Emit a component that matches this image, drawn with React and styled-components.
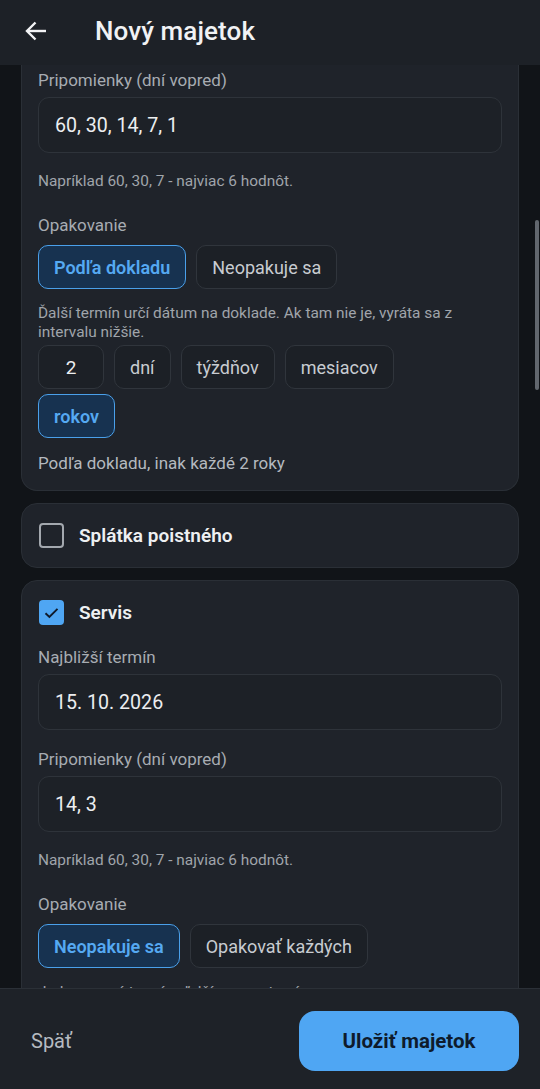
import React from "react";
import styled, { createGlobalStyle, css } from "styled-components";

const Global = createGlobalStyle`
  html, body { margin: 0; padding: 0; background: #111418; }
  body { font-family: Roboto, "Noto Sans", "Liberation Sans", sans-serif; -webkit-font-smoothing: antialiased; }
  * { box-sizing: border-box; }
`;

const Screen = styled.div`
  width: 540px;
  height: 1089px;
  display: flex;
  flex-direction: column;
  background: #111418;
  overflow: hidden;
`;

const Header = styled.header`
  height: 65px;
  flex: none;
  display: flex;
  align-items: center;
  gap: 48px;
  padding: 0 0 4px 25px;
  background: #1d2127;
`;

const BackButton = styled.button`
  width: 22px;
  height: 22px;
  padding: 0;
  border: 0;
  background: none;
  display: flex;
  color: #f2f3f5;
`;

const Title = styled.h1`
  margin: 0;
  font-size: 26px;
  font-weight: 500;
  color: #f1f2f4;
  letter-spacing: 0.1px;
`;

const ScrollArea = styled.main`
  position: relative;
  flex: 1;
  overflow: hidden;
`;

const Content = styled.div`
  display: flex;
  flex-direction: column;
  gap: 12px;
  padding: 0 21px;
`;

const Card = styled.section`
  display: flex;
  flex-direction: column;
  background: #1f232a;
  border: 1px solid #2a2f36;
  border-radius: 16px;
  padding: 19px 16px 16px;
  ${(p) =>
    p.$cut &&
    css`
      border-top: none;
      border-radius: 0 0 16px 16px;
      padding-top: 4px;
    `}
  ${(p) =>
    p.$compact &&
    css`
      padding-bottom: 19px;
    `}
`;

const CheckRow = styled.label`
  display: flex;
  align-items: center;
  gap: 15px;
  height: 25px;
  padding-left: 1px;
`;

const Box = styled.span`
  width: 25px;
  height: 25px;
  border-radius: 4px;
  display: flex;
  align-items: center;
  justify-content: center;
  ${(p) =>
    p.$checked
      ? css`
          background: #4fa6f3;
        `
      : css`
          border: 2px solid #a3a8ae;
        `}
`;

const CheckTitle = styled.span`
  font-size: 19px;
  font-weight: 600;
  color: #eef0f2;
`;

const Label = styled.div`
  font-size: 17px;
  line-height: 22px;
  color: #a7acb2;
  margin-top: ${(p) => p.$mt ?? 0}px;
  margin-bottom: 6px;
`;

const Input = styled.div`
  height: 56px;
  display: flex;
  align-items: center;
  padding: 0 16px;
  border: 1px solid #2e333a;
  border-radius: 11px;
  background: #1d2127;
  font-size: 19.6px;
  color: #eceef0;
`;

const Helper = styled.div`
  font-size: 15.4px;
  line-height: ${(p) => (p.$lh ? p.$lh : 20)}px;
  color: #a0a5ab;
  margin-top: ${(p) => p.$mt ?? 0}px;
`;

const Summary = styled.div`
  font-size: 17px;
  line-height: 22px;
  color: #b4b9bf;
  margin-top: 14px;
`;

const ChipRow = styled.div`
  display: flex;
  flex-wrap: wrap;
  gap: 5px 10px;
  margin-top: ${(p) => p.$mt ?? 3}px;
  max-width: ${(p) => (p.$narrow ? "390px" : "none")};
`;

const Chip = styled.button`
  height: 44px;
  padding: 0 15px;
  border-radius: 10px;
  font-family: inherit;
  font-size: 18px;
  display: flex;
  align-items: center;
  justify-content: center;
  ${(p) =>
    p.$active
      ? css`
          background: #173250;
          border: 1.5px solid #4aa0ea;
          color: #55a9f2;
          font-weight: 600;
        `
      : css`
          background: #1c2026;
          border: 1px solid #30353c;
          color: #c8ccd1;
          font-weight: 400;
        `}
`;

const NumberBox = styled(Chip)`
  width: 66px;
  padding: 0;
  font-size: 19px;
  color: #eceef0;
`;

const ScrollThumb = styled.div`
  position: absolute;
  right: 1px;
  top: 155px;
  width: 4px;
  height: 170px;
  border-radius: 3px;
  background: #62676e;
`;

const Footer = styled.footer`
  height: 101px;
  flex: none;
  display: flex;
  align-items: center;
  justify-content: space-between;
  padding: 4px 21px 0 31px;
  background: #1e2228;
  border-top: 1px solid #2b3037;
`;

const TextButton = styled.button`
  border: 0;
  background: none;
  padding: 0;
  font-family: inherit;
  font-size: 20px;
  color: #b6bbc1;
`;

const PrimaryButton = styled.button`
  width: 220px;
  height: 60px;
  border: 0;
  border-radius: 16px;
  background: #4fa6f3;
  color: #0e1b2c;
  font-family: inherit;
  font-size: 20.5px;
  font-weight: 700;
`;

const ArrowBack = () => (
  <svg width="22" height="22" viewBox="0 0 22 22" fill="none">
    <path d="M21 11H2.5" stroke="currentColor" strokeWidth="2.4" />
    <path d="M10.5 2.5 2 11l8.5 8.5" stroke="currentColor" strokeWidth="2.4" strokeLinejoin="miter" />
  </svg>
);

const Check = () => (
  <svg width="15" height="12" viewBox="0 0 15 12" fill="none">
    <path d="M1.5 6.2 5.4 10 13.5 1.8" stroke="#0f1a2a" strokeWidth="1.9" />
  </svg>
);

export default function App() {
  return (
    <>
      <Global />
      <Screen>
        <Header>
          <BackButton aria-label="Späť">
            <ArrowBack />
          </BackButton>
          <Title>Nový majetok</Title>
        </Header>

        <ScrollArea>
          <Content>
            <Card $cut>
              <Label>Pripomienky (dní vopred)</Label>
              <Input>60, 30, 14, 7, 1</Input>
              <Helper $mt={18}>Napríklad 60, 30, 7 - najviac 6 hodnôt.</Helper>
              <Label $mt={23}>Opakovanie</Label>
              <ChipRow>
                <Chip $active>Podľa dokladu</Chip>
                <Chip>Neopakuje sa</Chip>
              </ChipRow>
              <Helper $mt={15} $lh={19}>
                Ďalší termín určí dátum na doklade. Ak tam nie je, vyráta sa z intervalu nižšie.
              </Helper>
              <ChipRow $narrow $mt={3}>
                <NumberBox>2</NumberBox>
                <Chip>dní</Chip>
                <Chip>týždňov</Chip>
                <Chip>mesiacov</Chip>
                <Chip $active>rokov</Chip>
              </ChipRow>
              <Summary>Podľa dokladu, inak každé 2 roky</Summary>
            </Card>

            <Card $compact>
              <CheckRow>
                <Box />
                <CheckTitle>Splátka poistného</CheckTitle>
              </CheckRow>
            </Card>

            <Card>
              <CheckRow>
                <Box $checked>
                  <Check />
                </Box>
                <CheckTitle>Servis</CheckTitle>
              </CheckRow>
              <Label $mt={21}>Najbližší termín</Label>
              <Input>15. 10. 2026</Input>
              <Label $mt={18}>Pripomienky (dní vopred)</Label>
              <Input>14, 3</Input>
              <Helper $mt={18}>Napríklad 60, 30, 7 - najviac 6 hodnôt.</Helper>
              <Label $mt={23}>Opakovanie</Label>
              <ChipRow>
                <Chip $active>Neopakuje sa</Chip>
                <Chip>Opakovať každých</Chip>
              </ChipRow>
              <Helper $mt={15} $lh={19}>
                Jednorazový termín, ďalší sa nevytvorí.
              </Helper>
            </Card>
          </Content>
          <ScrollThumb />
        </ScrollArea>

        <Footer>
          <TextButton>Späť</TextButton>
          <PrimaryButton>Uložiť majetok</PrimaryButton>
        </Footer>
      </Screen>
    </>
  );
}
